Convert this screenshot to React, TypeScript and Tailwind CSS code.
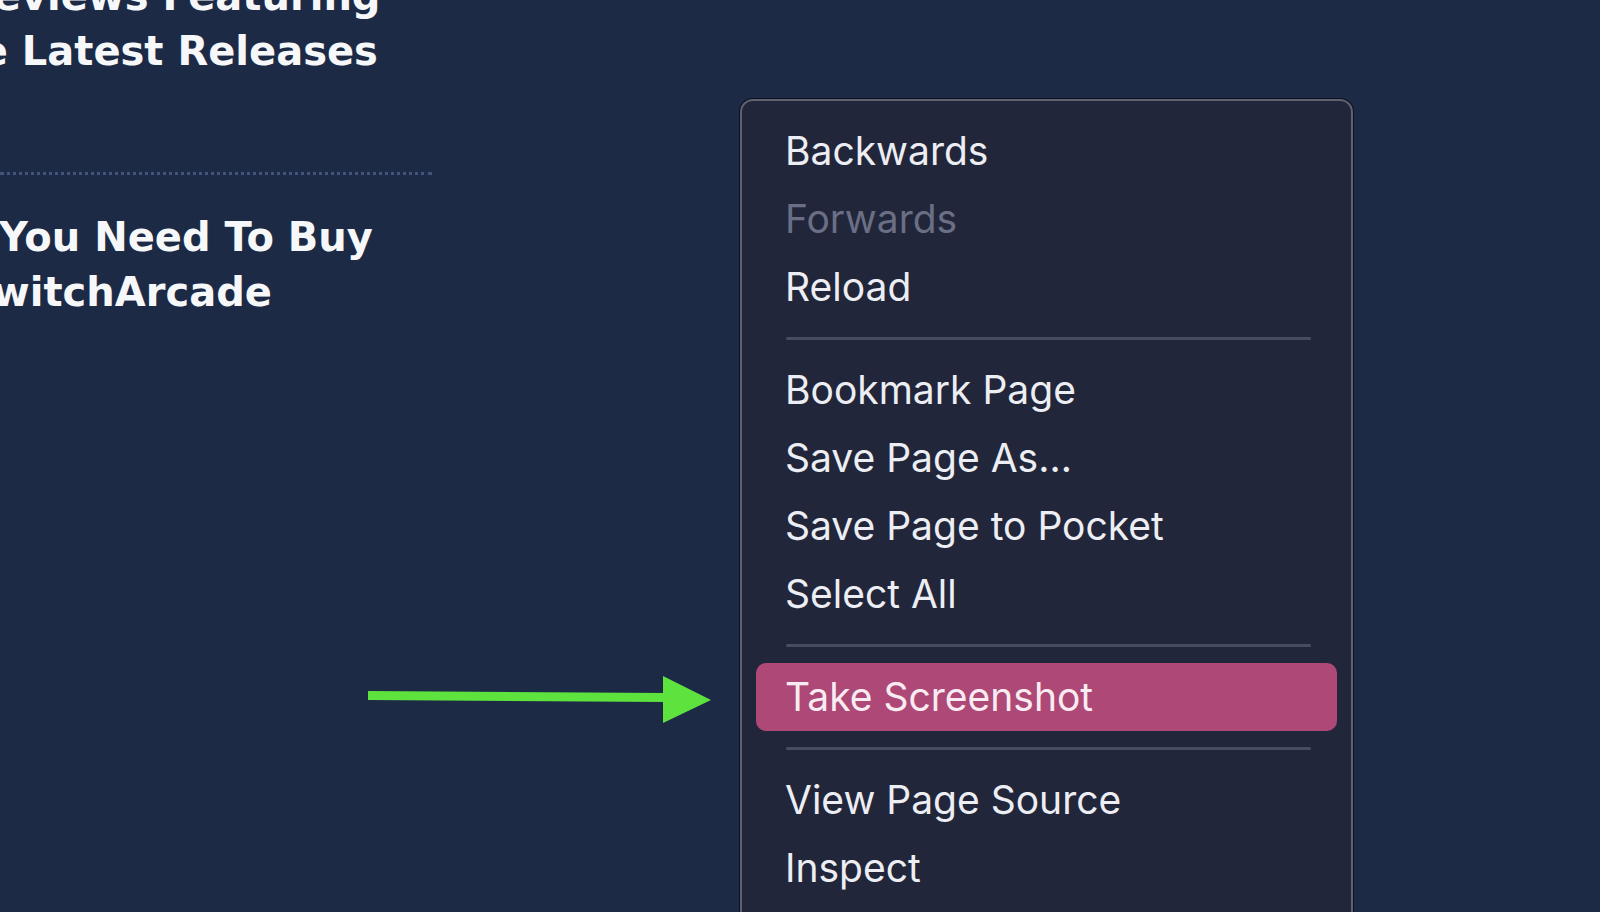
const menuFont = { fontFamily: "Inter, 'Noto Sans', sans-serif" };
const headFont = { fontFamily: "'DejaVu Sans', Verdana, sans-serif" };

type Item = { label: string; disabled?: boolean; active?: boolean } | "sep";

const items: Item[] = [
  { label: "Backwards" },
  { label: "Forwards", disabled: true },
  { label: "Reload" },
  "sep",
  { label: "Bookmark Page" },
  { label: "Save Page As…" },
  { label: "Save Page to Pocket" },
  { label: "Select All" },
  "sep",
  { label: "Take Screenshot", active: true },
  "sep",
  { label: "View Page Source" },
  { label: "Inspect" },
];

function Arrow() {
  return (
    <svg
      className="absolute left-[360px] top-[670px]"
      width="360"
      height="60"
      viewBox="0 0 360 60"
    >
      <path d="M8 21 L305 23 L305 32 L8 30 Z" fill="#5ee23e" />
      <path d="M303 6 L351 30 L303 53 Z" fill="#5ee23e" />
    </svg>
  );
}

export default function App() {
  return (
    <div className="flex h-[912px] w-[1600px] overflow-hidden bg-[#1c2a46]">
      <div className="relative w-[740px] shrink-0">
        <div
          className="mt-[-31px] text-[40px] font-bold leading-[55px] text-[#f6f7f9] whitespace-nowrap"
          style={headFont}
        >
          <div className="ml-[-37px]">Reviews Featuring</div>
          <div className="ml-[-75px]">The Latest Releases</div>
        </div>
        <div className="mt-[93px] w-[432px] border-t-[3px] border-dotted border-[#41537a]" />
        <div
          className="mt-[35px] text-[40px] font-bold leading-[55px] text-[#f6f7f9] whitespace-nowrap"
          style={headFont}
        >
          <div className="ml-[-1px]">You Need To Buy</div>
          <div className="ml-[-36px]">SwitchArcade</div>
        </div>
        <Arrow />
      </div>

      <div
        className="mt-[99px] h-[860px] w-[613px] shrink-0 rounded-[13px] border-2 border-[#60636f] bg-[#22263a] px-[14px] pt-4 shadow-[0_0_0_1px_#0d1220]"
        style={menuFont}
      >
        {items.map((it, i) =>
          it === "sep" ? (
            <div key={i} className="ml-[30px] mr-[26px] my-4 h-[3px] rounded bg-[#484c60]" />
          ) : (
            <div
              key={i}
              className={
                "flex h-[68px] items-center px-[29px] text-[39px] " +
                (it.active
                  ? "rounded-[10px] bg-[#ae4876] text-[#f8ecf2]"
                  : it.disabled
                  ? "text-[#6a6f85]"
                  : "text-[#eceef3]")
              }
            >
              {it.label}
            </div>
          )
        )}
      </div>
    </div>
  );
}
